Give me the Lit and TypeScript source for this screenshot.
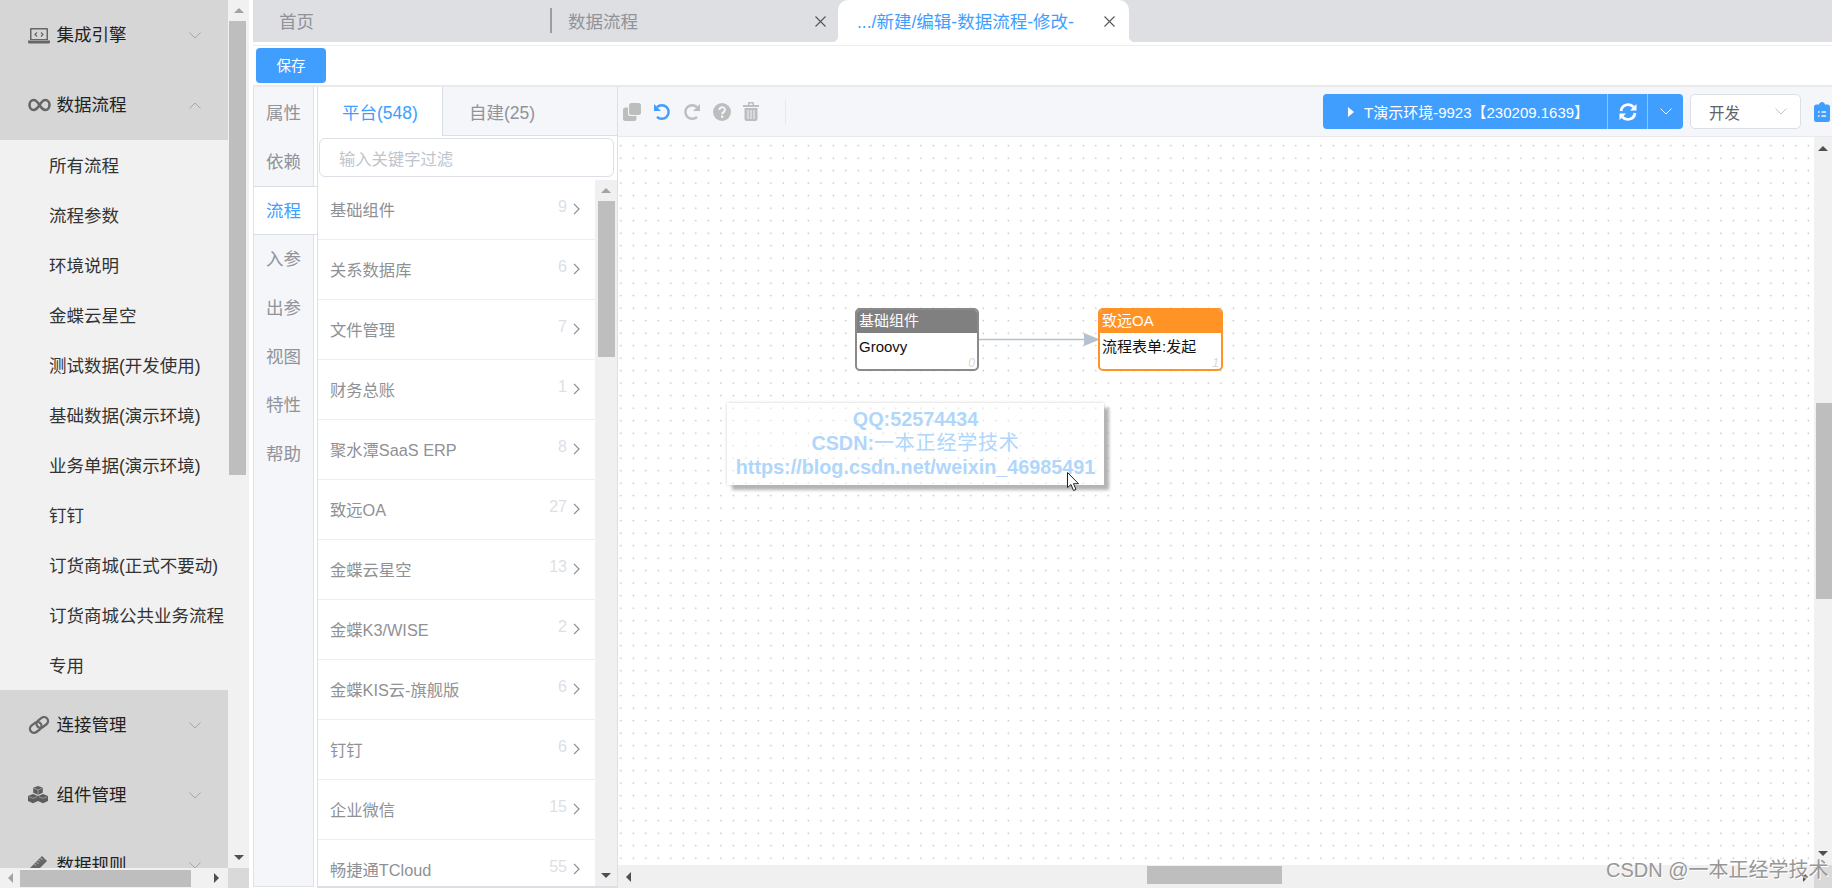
import { LitElement, html, css } from "lit";
import { customElement } from "lit/decorators.js";

const chevDown = html`<svg width="12" height="7" viewBox="0 0 12 7"><path d="M.5.5 6 6 11.5.5" fill="none" stroke="currentColor" stroke-width="1"/></svg>`;
const chevUp = html`<svg width="12" height="7" viewBox="0 0 12 7"><path d="M.5 6.5 6 1l5.5 5.5" fill="none" stroke="currentColor" stroke-width="1"/></svg>`;
const closeX = html`<svg class="x" width="11" height="11" viewBox="0 0 11 11"><path d="M.5.5l10 10M10.5.5l-10 10" stroke="#555" stroke-width="1.1" fill="none"/></svg>`;

const icons = {
  laptop: html`<svg width="22" height="17" viewBox="0 0 22 17"><path fill-rule="evenodd" fill="#666" d="M3 1h16a1 1 0 0 1 1 1v11H2V2a1 1 0 0 1 1-1Zm.5 1.5V12h15V2.5Z"/><path fill="#666" d="M0 13.5h22V15a1.5 1.5 0 0 1-1.5 1.5h-19A1.5 1.5 0 0 1 0 15Z"/><path d="M9 5.5 7 7.5l2 2M13 5.5l2 2-2 2" fill="none" stroke="#666" stroke-width="1.2"/></svg>`,
  inf: html`<svg width="23" height="14" viewBox="0 0 23 14"><path d="M11.5 7C9.5 3.8 8 2 5.6 2 3.3 2 1.5 4.200 1.500 7s1.800 5 4.100 5c2.400 0 3.900-1.800 5.900-5 2-3.200 3.500-5 5.900-5 2.300 0 4.100 2.200 4.100 5s-1.800 5-4.100 5c-2.400 0-3.900-1.800-5.900-5Z" fill="none" stroke="#666" stroke-width="2.600"/></svg>`,
  link: html`<svg width="22" height="20" viewBox="0 0 22 20"><g fill="none" stroke="#666" stroke-width="2.300"><rect x="1.500" y="8.500" width="12.500" height="8" rx="4" transform="rotate(-38 7.700 12.500)"/><rect x="8" y="3.500" width="12.500" height="8" rx="4" transform="rotate(-38 14.200 7.500)"/></g></svg>`,
  cubes: html`<svg width="20" height="18" viewBox="0 0 20 18"><g fill="#5c5c5c"><path d="M10 0l4.800 1.800v5L10 8.800 5.200 6.800v-5Z"/><path d="M5 8l5 1.900V15l-5 2.200L0 15V9.900Z"/><path d="M15 8l5 1.900V15l-5 2.200L10 15V9.900Z"/></g><g fill="none" stroke="#d6d6d6" stroke-width=".5"><path d="M5.800 2.200 10 4l4.200-1.800M10 4v4"/><path d="M.8 10.700 5 12.400l4.200-1.700"/><path d="M10.800 10.700 15 12.400l4.200-1.700"/></g></svg>`,
  ruler: html`<svg width="20" height="20" viewBox="0 0 20 20"><path fill="#666" d="M14 1l5 5L6 19l-5-5Z"/><path d="M12.500 3l2 2M10.500 5l1.500 1.500M8.500 7l2 2M6.500 9l1.500 1.500" stroke="#d6d6d6" stroke-width=".8"/></svg>`,
};

const subItems = ["所有流程","流程参数","环境说明","金蝶云星空","测试数据(开发使用)","基础数据(演示环境)","业务单据(演示环境)","钉钉","订货商城(正式不要动)","订货商城公共业务流程","专用"];
const vTabs = ["属性","依赖","流程","入参","出参","视图","特性","帮助"];
const listItems: [string, number][] = [["基础组件",9],["关系数据库",6],["文件管理",7],["财务总账",1],["聚水潭SaaS ERP",8],["致远OA",27],["金蝶云星空",13],["金蝶K3/WISE",2],["金蝶KIS云-旗舰版",6],["钉钉",6],["企业微信",15],["畅捷通TCloud",55]];
const nodes = [
  { x: 237, y: 171, w: 124, h: 63, head: "基础组件", body: "Groovy", n: 0, cls: "grey" },
  { x: 480, y: 171, w: 125, h: 63, head: "致远OA", body: "流程表单:发起", n: 1, cls: "orange" },
];

@customElement("app-root")
export class AppRoot extends LitElement {
  static styles = css`
    :host { display: flex; position: relative; width: 1832px; height: 888px; overflow: hidden; background: #fff;
      font-family: "Liberation Sans", "Noto Sans CJK SC", sans-serif; color: #303133; }
    svg { display: block; flex: none; }

    .side { width: 249px; flex: none; display: grid; grid-template-columns: 228px 21px; grid-template-rows: 868px 20px; background: #f1f1f1; }
    .menu { overflow: hidden; }
    .mh { height: 70px; display: flex; align-items: center; background: #d6d6d6; padding: 0 27px 0 28px; font-size: 17.500px; line-height: 24px; color: #222; }
    .mh .ic { width: 28.500px; flex: none; }
    .mh .lb { flex: 1; }
    .mh .ch { color: #a2a6ad; }
    .mi { height: 50px; line-height: 52px; padding-left: 49px; font-size: 17.500px; color: #333; white-space: nowrap; }

    .vsb { display: flex; flex-direction: column; align-items: center; background: #f1f1f1; }
    .arrow-box { height: 21px; flex: none; display: flex; align-items: center; justify-content: center; width: 100%; }
    .thumb { background: #bebebe; }
    .vsb .fill { flex: 1; }
    .up { width: 0; height: 0; border: 5px solid transparent; border-top: 0; border-bottom: 5px solid #a3a3a3; }
    .up.dark { border-bottom-color: #505050; }
    .dn { width: 0; height: 0; border: 5px solid transparent; border-bottom: 0; border-top: 5px solid #505050; }
    .lf { width: 0; height: 0; border: 5px solid transparent; border-left: 0; border-right: 5px solid #505050; }
    .lf.dim { border-right-color: #a3a3a3; }
    .rt { width: 0; height: 0; border: 5px solid transparent; border-right: 0; border-left: 5px solid #505050; }
    .side .vsb .thumb { width: 17px; height: 454px; margin-left: -2px; }
    .hsb { display: flex; align-items: center; background: #f1f1f1; }
    .hsb .arrow-box { width: 20px; height: 100%; }
    .hsb .arrow-box.end { width: 24px; }
    .hsb .fill { flex: 1; }
    .side .hsb .thumb { width: 171px; height: 17px; }
    .corner { background: #d9d9d9; }

    .main { flex: 1; min-width: 0; margin-left: 4px; display: flex; flex-direction: column; }
    .tabs { height: 42px; flex: none; display: flex; background: #dddfe3; }
    .tab { height: 42px; display: flex; align-items: center; font-size: 17.500px; color: #909399; position: relative; white-space: nowrap; padding-bottom: 2px; }
    .tab .x { position: relative; top: 1px; }
    .t1 { width: 297px; padding-left: 26px; box-sizing: border-box; }
    .t2 { width: 288px; box-sizing: border-box; padding-left: 18px; }
    .t2 .sep { position: absolute; left: 0; top: 8px; width: 1.500px; height: 25px; background: #9a9da3; }
    .t2 .x { margin-left: 177px; }
    .t3 { width: 291px; box-sizing: border-box; padding-left: 19px; background: #fff; color: #409eff; border-radius: 10px 10px 0 0; }
    .tab.t3 .x { position: absolute; left: 266px; top: 16px; }
    .t3::before, .t3::after { content: ""; position: absolute; bottom: 0; width: 6px; height: 6px; }
    .t3::before { left: -6px; background: radial-gradient(circle at 0 0, transparent 6px, #fff 6.500px); }
    .t3::after { right: -6px; background: radial-gradient(circle at 100% 0, transparent 6px, #fff 6.500px); }

    .savebar { height: 39px; margin-top: 3px; flex: none; display: flex; align-items: center; border-top: 1px solid #eee; border-bottom: 2px solid #eaeaea; padding-left: 3px; }
    .save { width: 70px; height: 35px; box-sizing: border-box; padding-bottom: 2px; border-radius: 4px; background: #409eff; color: #fff; font-size: 14.500px; display: flex; align-items: center; justify-content: center; }

    .body { flex: 1; min-height: 0; display: flex; }
    .vt { width: 59px; flex: none; height: 797.500px; padding-top: 1.500px; background: #f4f6fa; border: 1px solid #dfe2e8; border-top: 0; margin-right: 3px; }
    .vi { height: 48.750px; box-sizing: border-box; display: flex; align-items: center; padding: 0 0 3px 12px; font-size: 17.500px; color: #909399; }
    .vi.on { background: #fff; color: #409eff; width: 63px; padding-bottom: 2px; border-top: 1px solid #d9dde4; border-bottom: 1px solid #d9dde4; }

    .lp { width: 299px; flex: none; height: 799px; border-left: 1px solid #dcdfe6; border-right: 1px solid #dcdfe6; border-bottom: 2px solid #dcdfe6; display: flex; flex-direction: column; overflow: hidden; }
    .ptabs { height: 49px; flex: none; display: flex; font-size: 17.500px; }
    .pt { display: flex; align-items: center; box-sizing: border-box; }
    .pt.a { width: 125px; padding-left: 24px; color: #409eff; border-right: 1px solid #dcdfe6; }
    .pt.b { flex: 1; padding-left: 26px; color: #909399; background: #f4f6fa; border-bottom: 1px solid #dcdfe6; }
    .inp { height: 39px; margin: 2px 3px 0 1px; box-sizing: border-box; border: 1px solid #dcdfe6; border-radius: 6px; display: flex; align-items: center; padding-left: 19px; font-size: 16.300px; color: #c0c4cc; flex: none; }
    .lwrap { flex: 1; min-height: 0; margin-top: 3px; display: flex; overflow: hidden; }
    .list { flex: 1; min-width: 0; overflow: hidden; }
    .li { height: 60px; box-sizing: border-box; border-bottom: 1px solid #ebeef5; display: flex; align-items: center; padding: 0 15px 1px 12px; font-size: 16.300px; color: #8f9195; }
    .li .lb { flex: 1; white-space: nowrap; }
    .li .ct { color: #dcdfe6; font-size: 16px; margin-right: 6px; position: relative; top: -2px; }
    .lsb { width: 22px; flex: none; display: flex; flex-direction: column; align-items: center; background: #f0f0f0; }
    .lsb .thumb { width: 17px; height: 156px; }
    .lsb .fill { flex: 1; }

    .cv { flex: 1; min-width: 0; display: flex; flex-direction: column; }
    .tb { height: 50px; flex: none; box-sizing: border-box; background: #f4f6fa; border-bottom: 1px solid #e8eaef; display: flex; align-items: center; padding-left: 5px; }
    .tools { display: flex; align-items: center; gap: 12px; }
    .tsep { width: 1px; height: 25px; background: #e6e8ec; margin-left: 26px; }
    .tsp { flex: 1; }
    .env { height: 35px; width: 360px; display: flex; background: #409eff; border-radius: 4px; color: #fff; font-size: 15px; flex: none; }
    .env .e1 { width: 284px; box-sizing: border-box; padding-left: 25px; display: flex; align-items: center; white-space: nowrap; }
    .env .play { width: 0; height: 0; border: 5px solid transparent; border-right: 0; border-left: 6px solid #fff; margin-right: 10px; }
    .env .e2 { width: 40px; border-left: 1px solid #8cc5ff; box-sizing: border-box; display: flex; align-items: center; justify-content: center; }
    .env .e3 { flex: 1; border-left: 1px solid #8cc5ff; display: flex; align-items: center; justify-content: center; color: #fff; }
    .sel { width: 111px; height: 35px; box-sizing: border-box; margin: 0 13px 0 7px; border: 1px solid #dcdfe6; border-radius: 5px; background: #fff; display: flex; align-items: center; justify-content: space-between; padding: 0 13px 0 18px; font-size: 15.500px; color: #606266; flex: none; }
    .sel span.c { color: #c0c4cc; }
    .clip { margin-right: 2px; }

    .cgrid { flex: 1; min-height: 0; display: grid; grid-template-columns: 1fr 18px; grid-template-rows: 728px 23px; }
    .canvas { position: relative; overflow: hidden; background-color: #fff;
      background-image: radial-gradient(circle at center, #b4b4b4 0, #b4b4b4 .8px, transparent 1px);
      background-size: 12.500px 12.500px; background-position: -3.450px 2.450px; }
    .csb { display: flex; flex-direction: column; align-items: center; background: #f1f1f1; }
    .csb .thumb { width: 16px; height: 196px; margin-top: 244px; margin-left: 1px; }
    .csb .arrow-box { height: 22px; }
    .csb .arrow-box.end { height: 24px; }
    .csb .fill { flex: 1; }
    .chb { display: flex; align-items: center; background: #f0f0f0; }
    .chb .arrow-box { width: 20px; height: 100%; }
    .chb .thumb { width: 135px; height: 18px; margin-left: 509px; margin-top: -4px; }
    .chb .fill { flex: 1; }
    .chb .arrow-box.r { width: 17px; }

    .node { position: absolute; box-sizing: border-box; border: 2px solid; border-radius: 5px; background: #fff; overflow: hidden; display: flex; flex-direction: column; }
    .node.grey { border-color: #8a8a8a; }
    .node.orange { border-color: #ff9326; }
    .nh { height: 23px; line-height: 22px; color: #fff; font-size: 15px; padding-left: 2px; flex: none; }
    .grey .nh { background: #808080; }
    .orange .nh { background: #ff9326; }
    .nb { padding: 2px 0 0 2px; line-height: 24px; font-size: 15px; color: #111; white-space: nowrap; }
    .nn { position: absolute; right: 2px; bottom: -1px; font-size: 12px; font-style: italic; color: #d8d8d8; }
    .edge { position: absolute; left: 361px; top: 196px; }

    .note { position: absolute; left: 109px; top: 266px; width: 377px; height: 82px; box-sizing: border-box; box-shadow: 5px 5px 3px #b4b4b4, 0 0 3px #ccc; background: rgba(255,255,255,.45); text-align: center; color: #b0d6fb; font-size: 19.800px; font-weight: 700; line-height: 24px; padding-top: 4px; white-space: nowrap; }
    .note .cj { font-weight: 400; font-size: 20px; letter-spacing: .8px; }
    .cursor { position: absolute; left: 449px; top: 335px; }

    .wm { position: absolute; left: 1606px; top: 856px; font-size: 20px; line-height: 28px; color: #979797; text-shadow: 1px 1px 0 #fff; white-space: nowrap; }
  `;

  render() {
    return html`
      <aside class="side">
        <nav class="menu">
          <div class="mh"><span class="ic">${icons.laptop}</span><span class="lb">集成引擎</span><span class="ch">${chevDown}</span></div>
          <div class="mh"><span class="ic">${icons.inf}</span><span class="lb">数据流程</span><span class="ch">${chevUp}</span></div>
          ${subItems.map((s) => html`<div class="mi">${s}</div>`)}
          <div class="mh"><span class="ic">${icons.link}</span><span class="lb">连接管理</span><span class="ch">${chevDown}</span></div>
          <div class="mh"><span class="ic">${icons.cubes}</span><span class="lb">组件管理</span><span class="ch">${chevDown}</span></div>
          <div class="mh"><span class="ic">${icons.ruler}</span><span class="lb">数据规则</span><span class="ch">${chevDown}</span></div>
        </nav>
        <div class="vsb">
          <div class="arrow-box"><i class="up"></i></div>
          <div class="thumb"></div>
          <div class="fill"></div>
          <div class="arrow-box"><i class="dn"></i></div>
        </div>
        <div class="hsb">
          <div class="arrow-box"><i class="lf dim"></i></div>
          <div class="thumb"></div>
          <div class="fill"></div>
          <div class="arrow-box end"><i class="rt"></i></div>
        </div>
        <div class="corner"></div>
      </aside>

      <main class="main">
        <div class="tabs">
          <div class="tab t1">首页</div>
          <div class="tab t2"><i class="sep"></i>数据流程${closeX}</div>
          <div class="tab t3">.../新建/编辑-数据流程-修改-${closeX}</div>
        </div>
        <div class="savebar"><div class="save">保存</div></div>
        <div class="body">
          <div class="vt">
            ${vTabs.map((t) => html`<div class="vi ${t === "流程" ? "on" : ""}">${t}</div>`)}
          </div>
          <div class="lp">
            <div class="ptabs"><div class="pt a">平台(548)</div><div class="pt b">自建(25)</div></div>
            <div class="inp">输入关键字过滤</div>
            <div class="lwrap">
              <div class="list">
                ${listItems.map(([n, c]) => html`<div class="li"><span class="lb">${n}</span><span class="ct">${c}</span>
                  <svg width="7" height="12" viewBox="0 0 7 12"><path d="M1 .8 6 6 1 11.200" fill="none" stroke="#8a8d92" stroke-width="1.200"/></svg></div>`)}
              </div>
              <div class="lsb">
                <div class="arrow-box"><i class="up"></i></div>
                <div class="thumb"></div>
                <div class="fill"></div>
                <div class="arrow-box"><i class="dn"></i></div>
              </div>
            </div>
          </div>
          <div class="cv">
            <div class="tb">
              <div class="tools">
                <svg width="18" height="18" viewBox="0 0 18 18"><rect x="6" y="0" width="12" height="12" rx="2.500" fill="#bdbdbd"/><path d="M5 4.500v6.500a2 2 0 0 0 2 2h6.500v2.500A2.500 2.500 0 0 1 11 18H2.500A2.500 2.500 0 0 1 0 15.500V7a2.500 2.500 0 0 1 2.500-2.500Z" fill="#bdbdbd"/></svg>
                <svg width="18" height="18" viewBox="0 0 18 18"><path d="M4 4.200A6.800 6.800 0 1 1 4 13.800" fill="none" stroke="#409eff" stroke-width="2.400"/><path d="M1 1v7h7Z" fill="#409eff"/></svg>
                <svg width="18" height="18" viewBox="0 0 18 18"><path d="M14 4.200A6.800 6.800 0 1 0 14 13.800" fill="none" stroke="#bdbdbd" stroke-width="2.400"/><path d="M17 1v7h-7Z" fill="#bdbdbd"/></svg>
                <svg width="18" height="18" viewBox="0 0 18 18"><circle cx="9" cy="9" r="9" fill="#bdbdbd"/><path d="M6.300 7a2.800 2.700 0 1 1 4.400 2.100c-1 .7-1.500 1-1.500 2.200" fill="none" stroke="#f4f6fa" stroke-width="2"/><rect x="8" y="12.500" width="2.300" height="2.300" fill="#f4f6fa"/></svg>
                <svg width="16" height="19" viewBox="0 0 16 19"><path d="M0 3h16v2H0ZM5 3V1a1 1 0 0 1 1-1h4a1 1 0 0 1 1 1v2H9.500V1.500h-3V3Z" fill="#bdbdbd"/><path fill-rule="evenodd" d="M1.500 6h13v11a2 2 0 0 1-2 2h-9a2 2 0 0 1-2-2Zm3 2v9h1V8Zm3 0v9h1V8Zm3 0v9h1V8Z" fill="#bdbdbd"/></svg>
              </div>
              <div class="tsep"></div>
              <div class="tsp"></div>
              <div class="env">
                <div class="e1"><i class="play"></i>T演示环境-9923【230209.1639】</div>
                <div class="e2"><svg width="18" height="18" viewBox="0 0 18 18"><path d="M2 8A7.200 7.200 0 0 1 14.500 4M16 10A7.200 7.200 0 0 1 3.500 14" fill="none" stroke="#fff" stroke-width="2.800"/><path d="M17.500 1v6.500H11ZM.5 17v-6.500H7Z" fill="#fff"/></svg></div>
                <div class="e3">${chevDown}</div>
              </div>
              <div class="sel"><span>开发</span><span class="c">${chevDown}</span></div>
              <svg class="clip" width="16" height="20" viewBox="0 0 16 20"><path fill="#409eff" d="M5 2.500C5.300 1 6.500 0 8 0s2.700 1 3 2.500h2.500A2.500 2.500 0 0 1 16 5v12.500a2.500 2.500 0 0 1-2.500 2.500h-11A2.500 2.500 0 0 1 0 17.500V5a2.500 2.500 0 0 1 2.500-2.500Z"/><path stroke="#f4f6fa" stroke-width="1.400" d="M4 10h1.500M7.500 10H12M4 14h1.500M7.500 14H12"/></svg>
            </div>
            <div class="cgrid">
              <div class="canvas">
                <svg class="edge" width="122" height="14" viewBox="0 0 122 14"><path d="M0 6.500h106" stroke="#b4c2d0" stroke-width="1.400"/><path d="M105 0l16 6.500L105 13Z" fill="#b4c2d0"/></svg>
                ${nodes.map((n) => html`<div class="node ${n.cls}" style="left:${n.x}px;top:${n.y}px;width:${n.w}px;height:${n.h}px">
                  <div class="nh">${n.head}</div><div class="nb">${n.body}</div><div class="nn">${n.n}</div></div>`)}
                <div class="note">
                  <div>QQ:52574434</div>
                  <div>CSDN:<span class="cj">一本正经学技术</span></div>
                  <div>https://blog.csdn.net/weixin_46985491</div>
                </div>
                <svg class="cursor" width="13" height="19" viewBox="0 0 13 19"><path d="M.5.5v15l3.500-3 2.500 6 2.500-1-2.500-5.800h5Z" fill="#fff" stroke="#222" stroke-width="1"/></svg>
              </div>
              <div class="csb">
                <div class="arrow-box"><i class="up dark"></i></div>
                <div class="thumb"></div>
                <div class="fill"></div>
                <div class="arrow-box end"><i class="dn"></i></div>
              </div>
              <div class="chb">
                <div class="arrow-box"><i class="lf"></i></div>
                <div class="thumb"></div>
                <div class="fill"></div>
                <div class="arrow-box r"><i class="rt"></i></div>
              </div>
              <div class="corner"></div>
            </div>
          </div>
        </div>
      </main>
      <div class="wm">CSDN @一本正经学技术</div>
    `;
  }
}
